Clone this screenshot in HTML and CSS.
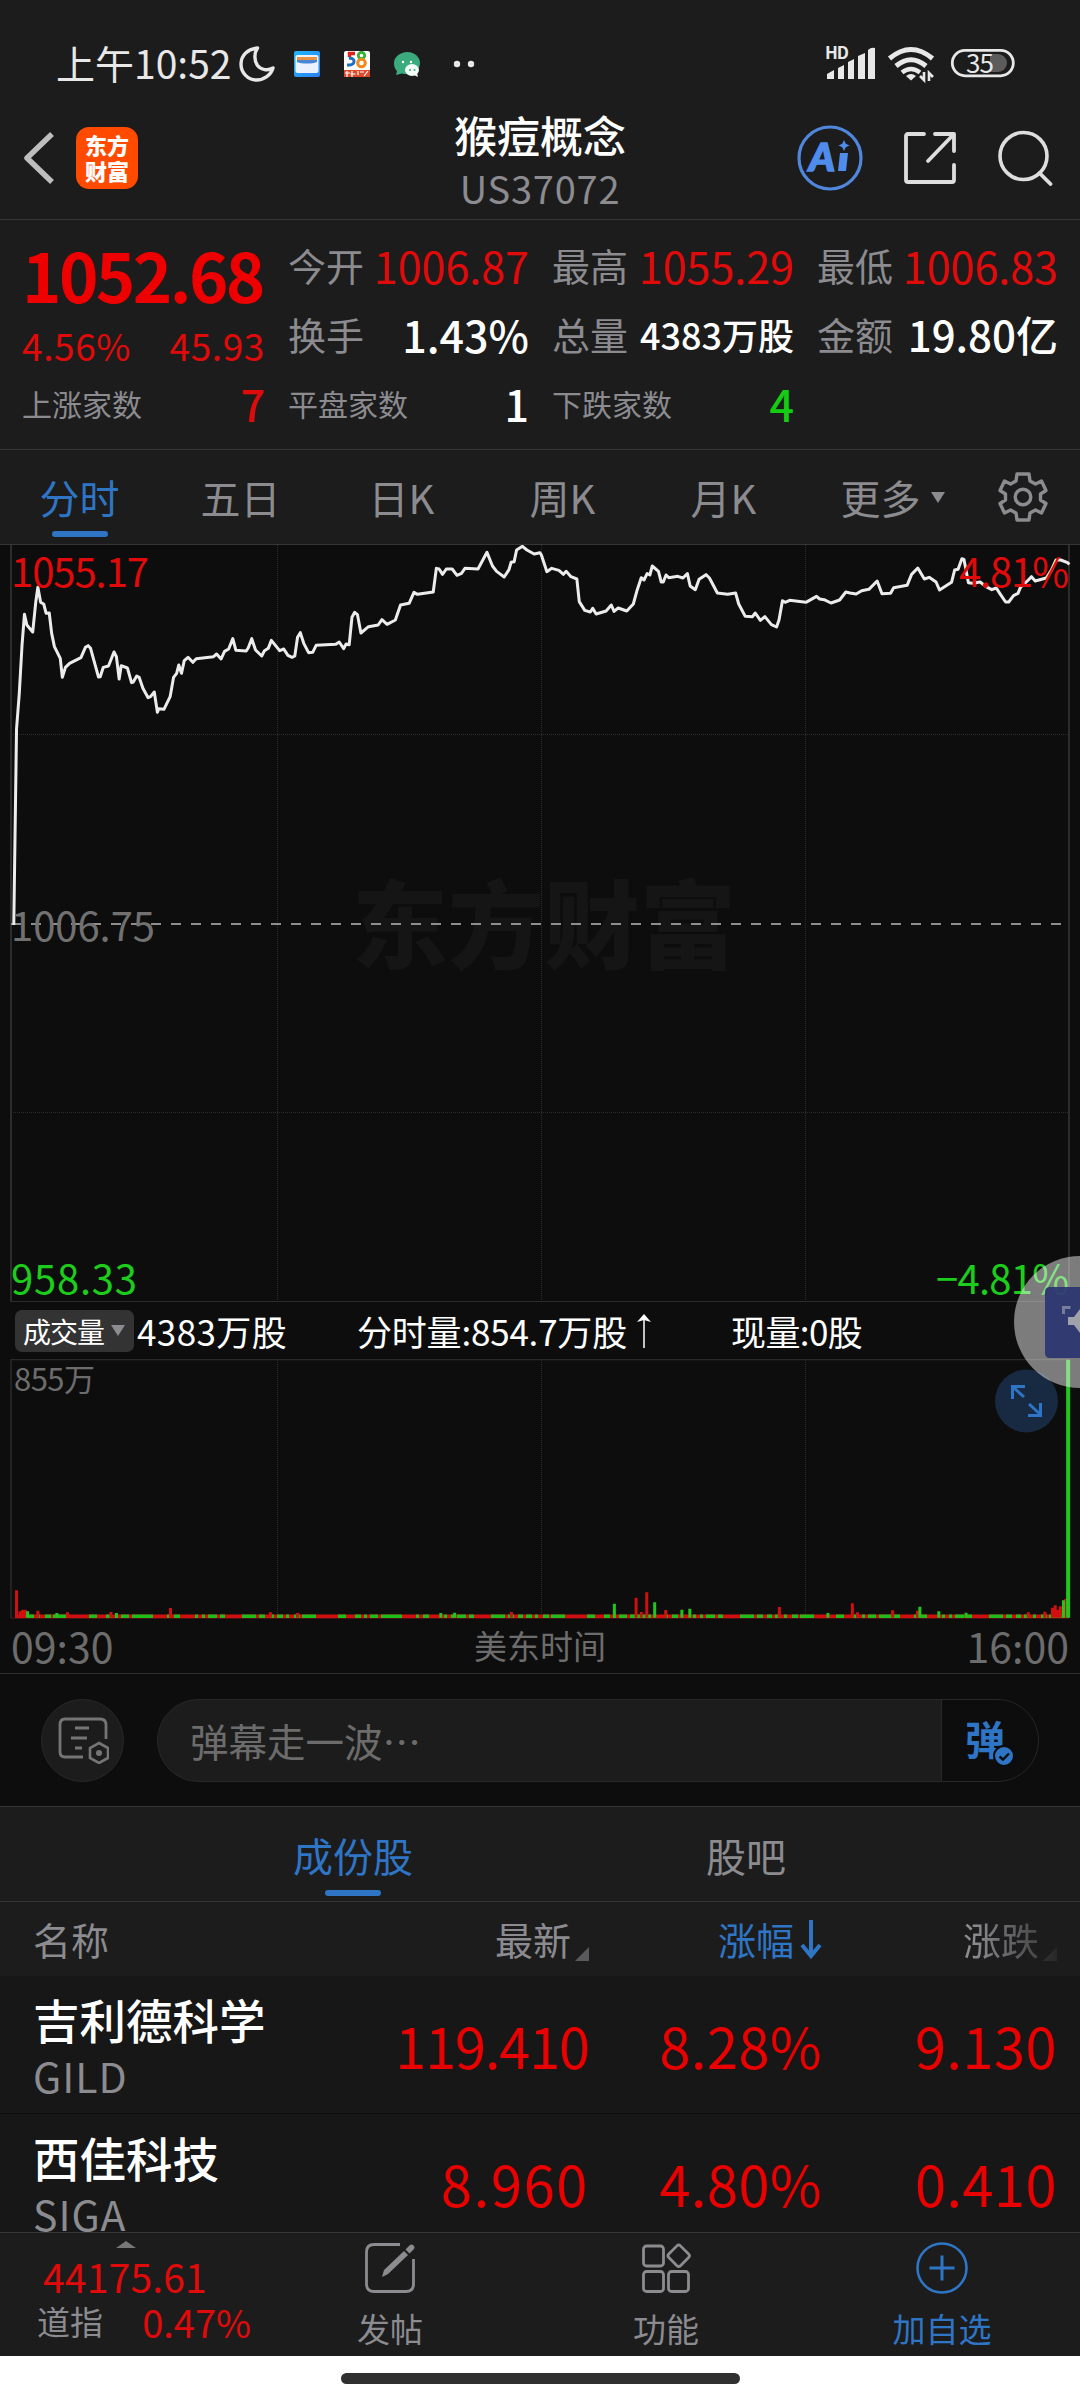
FILE: index.html
```html
<!DOCTYPE html>
<html lang="zh-CN">
<head>
<meta charset="UTF-8" />
<meta name="viewport" content="width=device-width, initial-scale=1" />
<title>猴痘概念 US37072</title>
<link rel="stylesheet" href="styles.css">
</head>
<body>
<div class="phone">

  <!-- status bar -->
  <div class="status">
    <span class="clock">上午10:52</span>
    <svg class="moon" width="36" height="36" viewBox="0 0 36 36"><path d="M18.500 2C9 3 2 9 2 18c0 9 7 16 15.500 16C25 34 32 29 34 22c-5 3-12 2-15.500-2.500C15 14.500 15 7 18.500 2z" fill="none" stroke="#e8e8e8" stroke-width="3.400" stroke-linejoin="round"/></svg>
    <svg class="app" width="26" height="26" viewBox="0 0 26 26">
      <defs><linearGradient id="wal" x1="0" y1="0" x2="1" y2="1"><stop offset="0" stop-color="#20b4fa"/><stop offset="1" stop-color="#2d80ee"/></linearGradient></defs>
      <rect width="26" height="26" rx="2" fill="url(#wal)"/>
      <rect x="1.500" y="4" width="23" height="18" rx="2" fill="#e9f2fd"/>
      <rect x="3" y="6" width="20" height="3" fill="#e8913f"/>
      <path d="M3 9h20v2c-5 2-15 2-20 0z" fill="#4a86d8"/>
    </svg>
    <svg class="app" width="26" height="26" viewBox="0 0 26 26">
      <rect width="26" height="26" rx="2" fill="#fff"/>
      <path d="M11 2.500H5.500V6" fill="none" stroke="#e0201b" stroke-width="3.500"/>
      <path d="M5 7.500c6-1.500 7 6 1 6.500H3" fill="none" stroke="#1b6fc4" stroke-width="3"/>
      <circle cx="17.500" cy="4.500" r="3.200" fill="none" stroke="#35b234" stroke-width="2.800"/>
      <circle cx="17.500" cy="12" r="3.800" fill="none" stroke="#ef8a1d" stroke-width="3"/>
      <rect y="19" width="26" height="7" fill="#dc4a2c"/>
      <path d="M3 20v6M1 22h5M8 20v6M6.500 23h5M14 20v4M16 21h4M20 25l4-5" stroke="#fff" stroke-width="1.200"/>
    </svg>
    <svg class="app" width="27" height="26" viewBox="0 0 27 26">
      <path d="M13.500 1C6 1 0 6 0 12c0 4 1 6 3 8l-1 4 6-1.500c9 2 18-2 18-10.500C26 6 20.500 1 13.500 1z" fill="#3bab7e"/>
      <ellipse cx="18" cy="19" rx="7" ry="6" fill="#f2fbf6"/><path d="M20 24l4 2-1-4z" fill="#f2fbf6"/>
      <circle cx="9" cy="11" r="1.200" fill="#fff"/><circle cx="17" cy="11" r="1.200" fill="#fff"/>
      <circle cx="16" cy="19" r="1" fill="#3bab7e"/><circle cx="20.500" cy="19" r="1" fill="#3bab7e"/>
    </svg>
    <svg class="dots" width="22" height="8" viewBox="0 0 22 8"><circle cx="4" cy="4" r="3.200" fill="#e8e8e8"/><circle cx="18" cy="4" r="3.200" fill="#e8e8e8"/></svg>
    <svg class="sys" width="194" height="40" viewBox="824 44 194 40">
      <text class="hd" x="825" y="59" textLength="24">HD</text>
      <g fill="#e8e8e8">
        <path d="M827 79v-5l7-4v9zM838 79V68l6-3v14zM848 79V62l6-3v20zM858 79V56l7-3v26zM868 79V50q3-3 7-2v31z"/>
      </g>
      <g fill="none" stroke="#e8e8e8" stroke-width="5">
        <path d="M889.500 58.500q21.500-18 43 0"/>
        <path d="M896 66q15-12.500 30 0"/>
        <path d="M902 72.500q9-7 18 0" stroke-width="4.500"/>
      </g>
      <path d="M906 76q5-4 10 0l-5 4.500z" fill="#e8e8e8"/>
      <path d="M924 72v8l-4-4M929 81v-8l4 4" fill="none" stroke="#e8e8e8" stroke-width="2.600"/>
      <path d="M990 54h8a9 9 0 0 1 0 18h-8z" fill="#5c5c5c"/>
      <rect x="952.300" y="50.300" width="61" height="25.500" rx="12.700" fill="none" stroke="#e8e8e8" stroke-width="2.800"/>
      <text class="bat" x="966" y="73" textLength="28">35</text>
    </svg>
  </div>

  <!-- title bar -->
  <header class="topbar">
    <div class="top-left">
      <svg width="34" height="56" viewBox="0 0 34 56"><path d="M29 4L4 28l25 24" fill="none" stroke="#bebebe" stroke-width="5.500" stroke-linejoin="round"/></svg>
      <div class="logo"><span>东方</span><span>财富</span></div>
    </div>
    <div class="title">
      <h1>猴痘概念</h1>
      <p>US37072</p>
    </div>
    <div class="top-right">
      <svg width="66" height="66" viewBox="0 0 66 66">
        <circle cx="33" cy="33" r="31" fill="none" stroke="#5087dc" stroke-width="3.200"/>
        <text class="ai" x="12" y="46" textLength="26" lengthAdjust="spacingAndGlyphs">A</text>
        <path d="M43 28h8l-2 18h-8z" fill="#4f8cec"/>
        <path d="M47 15l1.800 3.700L52.500 20.500l-3.700 1.800L47 26l-1.800-3.700-3.700-1.800 3.700-1.800z" fill="#4f8cec"/>
      </svg>
      <svg width="54" height="54" viewBox="0 0 54 54"><path d="M21 3H5q-2 0-2 2v44q0 2 2 2h44q2 0 2-2V34M32 3h19v17M51 3L25 30" fill="none" stroke="#dedede" stroke-width="3.800" stroke-linecap="round" stroke-linejoin="round"/></svg>
      <svg width="56" height="56" viewBox="0 0 56 56"><circle cx="26.500" cy="26" r="23.500" fill="none" stroke="#dedede" stroke-width="3.600"/><path d="M42.500 43l11 11" stroke="#dedede" stroke-width="3.800" stroke-linecap="round"/></svg>
    </div>
  </header>

  <!-- quote -->
  <section class="quote">
    <div class="q-col">
      <div class="price">1052.68</div>
      <div class="change"><span>4.56%</span><span>45.93</span></div>
      <div class="q-row"><label class="small">上涨家数</label><b class="red">7</b></div>
    </div>
    <div class="q-col">
      <div class="q-row"><label>今开</label><span class="red">1006.87</span></div>
      <div class="q-row"><label>换手</label><b>1.43%</b></div>
      <div class="q-row"><label class="small">平盘家数</label><b>1</b></div>
    </div>
    <div class="q-col">
      <div class="q-row"><label>最高</label><span class="red">1055.29</span></div>
      <div class="q-row"><label>总量</label><b class="vol">4383万股</b></div>
      <div class="q-row"><label class="small">下跌家数</label><b class="green">4</b></div>
    </div>
    <div class="q-col">
      <div class="q-row"><label>最低</label><span class="red">1006.83</span></div>
      <div class="q-row"><label>金额</label><b class="amt">19.80亿</b></div>
    </div>
  </section>

  <nav class="periods">
    <a class="active">分时</a>
    <a>五日</a>
    <a>日K</a>
    <a>周K</a>
    <a>月K</a>
    <a class="more">更多<i class="tri"></i></a>
    <svg width="50" height="52" viewBox="-25 -26 50 52"><path d="M-6-23H6L7-16L12.500-13L18.500-16L23-6.500L17.500-3V3L23 6.500L18.500 16L12.500 13L7 16L6 23H-6L-7 16L-12.500 13L-18.500 16L-23 6.500L-17.500 3V-3L-23-6.500L-18.500-16L-12.500-13L-7-16Z" fill="none" stroke="#8b8b90" stroke-width="3.400" stroke-linejoin="round"/><circle r="7.800" fill="none" stroke="#8b8b90" stroke-width="3.400"/></svg>
  </nav>

  <!-- intraday chart -->
  <svg class="chart" width="1080" height="757" viewBox="0 545 1080 757">
    <text class="watermark" x="352" y="961" textLength="384">东方财富</text>
    <g class="grid">
      <path d="M277.500 545V1301M541.500 545V1301M805.500 545V1301M11 734.500H1069M11 1112.500H1069"/>
    </g>
    <path d="M11 545V1302H1069V545" fill="none" stroke="#2c2c2c" stroke-width="2"/>
    <path d="M11 924H1069" stroke="#8e8e8e" stroke-width="2" stroke-dasharray="10 10"/>
    <svg x="0" y="545" width="1080" height="756" viewBox="0 45 3136 2268" preserveAspectRatio="none">
      <polyline class="line" points="40,1185 48,597 56,490 64,345 71,253 78,285 95,306 104,215 110,172 118,217 127,222 134,250 143,249 150,310 158,350 175,385 181,442 190,412 202,400 235,383 248,352 256,347 263,355 275,400 286,441 291,440 300,412 315,408 331,366 338,380 346,447 352,407 370,414 382,458 387,456 397,438 404,442 415,475 430,503 437,500 448,486 457,547 461,536 476,538 494,500 504,442 513,430 519,405 527,430 535,392 546,382 560,397 570,386 620,380 629,372 642,387 652,364 664,357 676,326 685,361 715,363 721,353 731,326 742,360 760,378 768,362 779,355 788,331 812,362 824,357 836,376 848,382 856,378 864,322 872,308 882,340 896,368 908,367 918,346 975,343 985,336 998,356 1005,342 1014,344 1022,262 1030,247 1038,254 1048,309 1070,290 1098,285 1109,269 1124,283 1148,270 1163,225 1188,220 1202,187 1212,193 1258,186 1267,115 1275,117 1285,133 1296,117 1313,117 1327,136 1340,130 1350,115 1388,117 1414,67 1430,108 1442,124 1464,141 1478,119 1484,97 1493,95 1500,60 1517,49 1530,60 1551,72 1568,68 1572,75 1588,125 1602,115 1623,121 1636,133 1644,124 1658,140 1675,147 1682,215 1698,241 1714,246 1721,235 1731,252 1760,243 1775,225 1783,244 1795,234 1820,243 1839,222 1849,184 1862,143 1870,150 1879,131 1887,135 1894,108 1912,124 1920,156 1926,156 1934,135 1942,143 1968,139 1983,144 1996,131 2004,168 2019,179 2030,148 2050,134 2060,144 2083,189 2113,193 2136,189 2145,222 2164,259 2185,260 2193,249 2208,271 2221,260 2240,284 2255,291 2262,270 2272,212 2280,217 2293,211 2340,217 2371,199 2380,207 2393,209 2413,219 2438,210 2456,186 2468,189 2486,192 2502,182 2523,178 2547,153 2561,191 2586,190 2595,173 2634,166 2647,133 2665,114 2684,147 2698,142 2718,156 2728,180 2763,157 2772,120 2782,118 2793,86 2799,88 2812,158 2824,160 2846,156 2863,170 2880,179 2893,174 2903,190 2920,216 2929,216 2943,197 2956,190 2963,172 2986,150 2995,140 3006,153 3038,144 3053,120 3066,90 3080,90 3100,98 3105,103"/>
    </svg>
    <text class="lbl up" x="11" y="587" textLength="138">1055.17</text>
    <text class="lbl up" x="959" y="587" textLength="110">4.81%</text>
    <text class="lbl mid" x="11" y="941" textLength="144">1006.75</text>
    <text class="lbl down" x="11" y="1294" textLength="126">958.33</text>
    <text class="lbl down" x="936" y="1294" textLength="133">−4.81%</text>
  </svg>

  <div class="vol-info">
    <span class="badge">成交量<i class="tri"></i></span>
    <span class="v1">4383万股</span>
    <span class="v2">分时量:854.7万股<svg width="16" height="34" viewBox="0 0 16 34"><path d="M8 34V3" stroke="#fff" stroke-width="1.500"/><path d="M1 8l7-8 7 8-7-2z" fill="#fff"/></svg></span>
    <span class="v3">现量:0股</span>
  </div>

  <!-- volume chart -->
  <svg class="chart" width="1080" height="260" viewBox="0 1359 1080 260">
    <g class="grid">
      <path d="M277.500 1360V1617M541.500 1360V1617M805.500 1360V1617"/>
    </g>
    <path d="M11 1618V1359.500H1069V1618" fill="none" stroke="#2a2a2a" stroke-width="1.500"/>
    <path d="M11 1618.300H1069" stroke="#551312"/>
    <text class="lbl vmax" x="14" y="1391" textLength="81">855万</text>
    <path d="M15 1616.300H1069" stroke="#d01010" stroke-width="3.400"/>
    <path d="M28 1616.300H1069" stroke="#1dbd1a" stroke-width="3.400" stroke-dasharray="6 3 3 5 6 2 14 22 8 9 6 3 3 3 8 3 21 14 3 4 6 15 3 4 3 3 9 3 5 17 14 3 6 4 5 3"/>
    <svg x="0" y="1359" width="1080" height="259" viewBox="0 358 3136 777" preserveAspectRatio="none">
      <path class="bar r" d="M48 1134V1052M58 1134V1115M66 1134V1110M73 1134V1110M110 1134V1113M196 1134V1118M322 1134V1117M495 1134V1105M785 1134V1118M864 1134V1120M1485 1134V1117M1847 1134V1074M1862 1134V1117M1878 1134V1058M1933 1134V1111M2263 1134V1102M2475 1134V1091M2490 1134V1118M2592 1134V1112M2664 1134V1113M2986 1134V1118M3034 1134V1116M3056 1134V1104M3064 1134V1097M3072 1134V1110M3079 1134V1100M3095 1134V1077"/>
      <path class="bar g" d="M80 1134V1115M165 1134V1120M338 1134V1120M1280 1134V1120M1320 1134V1119M1784 1134V1092M1901 1134V1088M1980 1134V1110M2003 1134V1107M2404 1134V1120M2671 1134V1101M2726 1134V1115M2805 1134V1119M3088 1134V1082M3100 1134V360M3103 1134V360"/>
    </svg>
    <circle cx="1026.500" cy="1401" r="31.500" fill="#172a42"/>
    <path d="M1024 1397l-12-11M1012.500 1399v-12.500H1025M1029 1404l12 11M1040.500 1403v12.500H1028" fill="none" stroke="#2f75c5" stroke-width="3"/>
  </svg>
  <div class="axis"><span>09:30</span><span class="zone">美东时间</span><span>16:00</span></div>

  <!-- barrage input -->
  <div class="barrage">
    <div class="round">
      <svg width="52" height="48" viewBox="57 1717 52 48"><path d="M83 1758H65q-5 0-5-5v-27q0-6 5-6h35q6 0 6 6v14M75 1729h14M71 1739h16M75 1749h7" fill="none" stroke="#757575" stroke-width="2.800"/><path d="M99 1744l9 5v10l-9 5-9-5v-10z" fill="none" stroke="#757575" stroke-width="2.600"/><circle cx="99" cy="1754" r="3" fill="#757575"/></svg>
    </div>
    <div class="field">
      <span class="hint">弹幕走一波…</span>
      <div class="dan"><span>弹</span><svg width="22" height="22" viewBox="0 0 22 22"><circle cx="11" cy="11" r="10" fill="#2f75c5" stroke="#0d0d0d" stroke-width="2"/><path d="M6.500 11.500l3.500 3 6-6" fill="none" stroke="#0d0d0d" stroke-width="2.400"/></svg></div>
    </div>
  </div>

  <nav class="tabs">
    <a class="active">成份股</a>
    <a>股吧</a>
  </nav>

  <!-- constituents -->
  <div class="list-head">
    <span class="name">名称</span>
    <span class="c1">最新<i class="corner"></i></span>
    <span class="c2">涨幅<svg width="22" height="40" viewBox="0 0 22 40"><path d="M11 1v34M2 26l9 11 9-11" fill="none" stroke="#2f75c5" stroke-width="4"/></svg></span>
    <span class="c3">涨跌<i class="corner"></i></span>
  </div>
  <div class="list">
    <div class="stock">
      <div class="name"><b>吉利德科学</b><small>GILD</small></div>
      <span class="c1 long">119.410</span><span class="c2">8.28%</span><span class="c3">9.130</span>
    </div>
    <div class="stock">
      <div class="name"><b>西佳科技</b><small>SIGA</small></div>
      <span class="c1">8.960</span><span class="c2">4.80%</span><span class="c3">0.410</span>
    </div>
  </div>

  <footer class="bottom">
    <div class="index">
      <i class="caret"></i>
      <div class="idx-val">44175.61</div>
      <div class="idx-row"><span>道指</span><span class="red">0.47%</span></div>
    </div>
    <a>
      <svg width="52" height="52" viewBox="0 0 52 52"><path d="M36 2.500H10Q2.500 2.500 2.500 10v32q0 7.500 7.500 7.500h32q7.500 0 7.500-7.500V17" fill="none" stroke="#8b8b90" stroke-width="2.800"/><path d="M18 35l2-7 20-19 4 4-20 19zM41.500 7.500l4-4q2-2 4 0t0 4l-4 4z" fill="#8b8b90"/></svg>
      <span>发帖</span>
    </a>
    <a>
      <svg width="52" height="52" viewBox="0 0 52 52"><g fill="none" stroke="#8b8b90" stroke-width="2.800"><rect x="3.500" y="4" width="20" height="20" rx="3"/><rect x="3.500" y="29.500" width="20" height="20" rx="3"/><rect x="28.500" y="29.500" width="20" height="20" rx="3"/><rect x="30.500" y="5.500" width="16.500" height="16.500" rx="2.500" transform="rotate(45 38.700 13.700)"/></g></svg>
      <span>功能</span>
    </a>
    <a class="active">
      <svg width="52" height="52" viewBox="0 0 52 52"><circle cx="26" cy="26" r="24.500" fill="none" stroke="#2f75c5" stroke-width="2.600"/><path d="M26 13.500v25M13.500 26h25" stroke="#2f75c5" stroke-width="3"/></svg>
      <span>加自选</span>
    </a>
  </footer>
  <div class="home"><div class="home-bar"></div></div>

  <!-- floating ball, half off screen -->
  <svg class="float" width="67" height="134" viewBox="1013 1255 67 134">
    <circle cx="1080" cy="1322" r="66" fill="#fff" fill-opacity=".46"/>
    <path d="M1080 1287h-30q-5 0-5 5v61q0 5 5 5h30z" fill="#2c3670" fill-opacity=".93"/>
    <path d="M1063.500 1314v-6.500h7" fill="none" stroke="#777d98" stroke-width="3"/>
    <path d="M1080 1309l-6 8h-6v8h6l6 8z" fill="#a0a2aa"/>
  </svg>
</div>
</body>
</html>
```
FILE: styles.css
```css
* {
  box-sizing: border-box;
}
body {
  margin: 0;
  background-color: #1c1c1c;
  color: #fff;
  font-family: "Noto Sans CJK SC", sans-serif;
}
svg {
  display: block;
  flex: none;
}
svg text {
  font-family: "Noto Sans CJK SC", sans-serif;
}
.phone {
  position: relative;
  width: 1080px;
  height: 2400px;
  overflow: hidden;
}
.red {
  color: #e00a0a;
}
.green {
  color: #13cd13;
}

/* status bar */
.status {
  display: flex;
  align-items: center;
  height: 100px;
  padding: 27px 62px 0 56px;
}
.clock {
  font-size: 39px;
  line-height: 40px;
  width: 183px;
  margin-top: -4px;
  color: #e8e8e8;
  white-space: nowrap;
}
.moon {
  margin-right: 19px;
}
.app {
  margin-right: 24px;
}
.dots {
  margin-left: 8px;
}
.sys {
  margin-left: auto;
}
.hd {
  font-size: 17px;
  font-weight: 700;
  fill: #e8e8e8;
}
.bat {
  font-size: 26px;
  fill: #e8e8e8;
}

/* title bar */
.topbar {
  display: grid;
  grid-template-columns: 1fr auto 1fr;
  align-items: center;
  height: 120px;
  border-bottom: 1px solid #363636;
}
.top-left {
  display: flex;
  align-items: center;
  gap: 19px;
  padding: 0 0 3px 23px;
}
.logo {
  display: flex;
  flex-direction: column;
  align-items: center;
  justify-content: center;
  width: 62px;
  height: 62px;
  padding-bottom: 3px;
  border-radius: 13px;
  background-color: #ff4a00;
  font-size: 22px;
  font-weight: 900;
  line-height: 26px;
}
.title {
  text-align: center;
  padding-bottom: 2px;
}
.title h1 {
  margin: 0;
  font-size: 43px;
  font-weight: 500;
  line-height: 58px;
}
.title p {
  margin: 0;
  font-size: 38px;
  line-height: 49px;
  letter-spacing: 0.8px;
  color: #8b8b90;
}
.top-right {
  display: flex;
  justify-content: flex-end;
  align-items: center;
  gap: 40px;
  padding: 0 27px 3px 0;
}
.ai {
  font-family: Lato, sans-serif;
  font-size: 37px;
  font-weight: 900;
  font-style: italic;
  fill: #4f8cec;
  stroke: #4f8cec;
  stroke-width: 1.5;
}

/* quote */
.quote {
  display: grid;
  grid-template-columns: 243px 241px 242px 241px;
  column-gap: 23px;
  height: 230px;
  padding: 10px 22px 0;
  border-bottom: 1px solid #363636;
}
.q-row {
  display: flex;
  justify-content: space-between;
  align-items: center;
  height: 69px;
  font-size: 43px;
  line-height: 60px;
  white-space: nowrap;
}
.q-row b {
  font-weight: 500;
}
.q-row label {
  font-size: 38px;
  color: #8b8b90;
}
.q-row label.small {
  font-size: 30px;
}
.q-row b.vol {
  font-size: 36px;
}
.q-row b.amt {
  font-size: 42px;
}
.price {
  height: 88px;
  line-height: 88px;
  font-size: 67px;
  font-weight: 700;
  letter-spacing: -2.6px;
  color: #ee0000;
}
.change {
  display: flex;
  justify-content: space-between;
  height: 54px;
  margin-bottom: -4px;
  line-height: 54px;
  font-size: 37px;
  letter-spacing: 0.6px;
  color: #e00a0a;
}

/* period tabs */
.periods {
  display: grid;
  grid-template-columns: repeat(6, 161px) 1fr;
  align-items: center;
  height: 95px;
  padding-right: 1px;
  border-bottom: 1px solid #363636;
  font-size: 40px;
  color: #8b8b90;
}
.periods a {
  display: flex;
  justify-content: center;
  align-items: center;
  height: 94px;
  margin-left: -2px;
  line-height: 94px;
}
.periods a.more {
  margin-left: 14px;
}
.periods a.active,
.tabs a.active {
  position: relative;
  color: #2f75c5;
}
.periods a.active::after,
.tabs a.active::after {
  content: "";
  position: absolute;
  left: 50%;
  bottom: 7px;
  width: 56px;
  height: 6px;
  margin-left: -28px;
  border-radius: 3px;
  background-color: #2f75c5;
}
.periods svg {
  margin-left: 32px;
}
.tri {
  width: 0;
  height: 0;
  border: 7px solid transparent;
  border-top: 11px solid #8b8b90;
  border-bottom: 0;
  margin-left: 10px;
}

/* charts */
.chart {
  background-color: #0d0d0d;
}
.grid path {
  fill: none;
  stroke: #2d2d2d;
  stroke-width: 1;
  stroke-dasharray: 1 1;
}
.line {
  fill: none;
  stroke: #ececec;
  stroke-width: 3;
  stroke-linejoin: round;
  vector-effect: non-scaling-stroke;
}
.watermark {
  font-size: 96px;
  font-weight: 900;
  fill: #151515;
}
.lbl {
  font-size: 40px;
}
.up {
  fill: #e00a0a;
}
.mid {
  fill: #717171;
}
.down {
  fill: #1ccd1c;
}
.vmax {
  font-size: 31px;
  fill: #6c6c6c;
}
.bar {
  fill: none;
  stroke-width: 3;
  vector-effect: non-scaling-stroke;
}
.bar.r {
  stroke: #d01010;
}
.bar.g {
  stroke: #20c51d;
}
.vol-info {
  display: grid;
  grid-template-columns: 122px 220px 374px 1fr;
  align-items: center;
  height: 57px;
  padding-left: 15px;
  background-color: #0d0d0d;
  font-size: 35px;
  line-height: 50px;
  white-space: nowrap;
}
.v1 {
  letter-spacing: 0.4px;
}
.badge {
  display: flex;
  align-items: center;
  width: 119px;
  height: 42px;
  padding-left: 8px;
  border-radius: 7px;
  background-color: #333;
  font-size: 28px;
  letter-spacing: -1px;
}
.badge .tri {
  margin-left: 7px;
}
.v2 {
  display: flex;
  align-items: center;
  letter-spacing: -0.2px;
}
.v2 svg {
  margin-left: 9px;
}
.v3 {
  letter-spacing: -0.6px;
}
.axis {
  display: flex;
  justify-content: space-between;
  align-items: center;
  height: 55px;
  padding: 0 11px 2px;
  border-bottom: 1px solid #303030;
  background-color: #0d0d0d;
  font-size: 41px;
  line-height: 50px;
  color: #6c6c6c;
}
.zone {
  font-size: 33px;
}

/* barrage */
.barrage {
  display: flex;
  align-items: center;
  gap: 33px;
  height: 133px;
  padding: 0 41px;
  border-bottom: 1px solid #363636;
  background-color: #0d0d0d;
}
.round {
  display: flex;
  align-items: center;
  justify-content: center;
  width: 83px;
  height: 83px;
  border: 1px solid #282828;
  border-radius: 50%;
  background-color: #1c1c1c;
}
.field {
  display: flex;
  justify-content: space-between;
  flex: 1;
  height: 83px;
  border: 1px solid #282828;
  border-radius: 42px;
  background-color: #1c1c1c;
  overflow: hidden;
}
.hint {
  padding-left: 32px;
  font-size: 38.500px;
  line-height: 80px;
  color: #6c6c6c;
}
.dan {
  position: relative;
  width: 97px;
  padding-left: 23px;
  border-left: 1px solid #282828;
  background-color: #0d0d0d;
  font-size: 40px;
  font-weight: 700;
  line-height: 76px;
  color: #2f75c5;
}
.dan svg {
  position: absolute;
  left: 51px;
  top: 45px;
}

/* list tabs */
.tabs {
  display: grid;
  grid-template-columns: 393px 393px;
  justify-content: center;
  height: 95px;
  padding-left: 19px;
  border-bottom: 1px solid #363636;
  font-size: 40px;
  line-height: 96px;
  text-align: center;
  color: #8b8b90;
}
.list-head,
.stock {
  display: grid;
  grid-template-columns: 301px 255px 233px 235px;
  align-items: center;
  padding-left: 33px;
}
.c1,
.c2,
.c3 {
  text-align: right;
}
.list-head {
  height: 74px;
  font-size: 38px;
  line-height: 72px;
  color: #8b8b90;
}
.list-head span {
  display: flex;
  justify-content: flex-end;
  align-items: center;
}
.list-head .name {
  justify-content: flex-start;
}
.list-head .c2 {
  color: #2f75c5;
}
.list-head .c2 svg {
  margin-left: 6px;
}
.list-head .c3 {
  -webkit-mask-image: linear-gradient(to right, #000 65%, rgba(0, 0, 0, 0.2));
  mask-image: linear-gradient(to right, #000 65%, rgba(0, 0, 0, 0.2));
}
.corner {
  width: 0;
  height: 0;
  border-left: 14px solid transparent;
  border-bottom: 14px solid #5a5a5d;
  margin: 30px 0 0 4px;
}
.list {
  height: 256px;
  overflow: hidden;
  background-color: #171717;
}
.stock {
  height: 138px;
  border-bottom: 1px solid #0d0d0d;
  font-size: 56px;
  letter-spacing: 0.4px;
  color: #e90000;
}
.stock span {
  line-height: 134px;
}
.stock .c1 {
  letter-spacing: 1.6px;
}
.stock .c1.long {
  letter-spacing: -1.2px;
}
.stock .name {
  display: flex;
  flex-direction: column;
  letter-spacing: 0;
  color: #fff;
}
.stock b {
  font-size: 46.500px;
  font-weight: 500;
  line-height: 60px;
}
.stock small {
  font-size: 41px;
  line-height: 52px;
  letter-spacing: 1px;
  color: #8b8b90;
}

/* bottom bar */
.bottom {
  display: grid;
  grid-template-columns: 252px 276px 276px 276px;
  height: 124px;
  border-top: 1px solid #363636;
  font-size: 33px;
  color: #8b8b90;
}
.bottom a {
  display: flex;
  flex-direction: column;
  align-items: center;
  padding-top: 9px;
}
.bottom a span {
  margin-top: 11px;
  line-height: 46px;
}
.bottom a.active {
  color: #2f75c5;
}
.index {
  display: flex;
  flex-direction: column;
  padding-top: 8px;
}
.caret {
  width: 0;
  height: 0;
  margin-left: 116px;
  border: 10px solid transparent;
  border-top: 0;
  border-bottom: 7px solid #77777a;
}
.idx-val {
  margin-top: 6px;
  padding-left: 43px;
  font-size: 39px;
  line-height: 45px;
  letter-spacing: 0.2px;
  color: #e00a0a;
}
.idx-row {
  display: flex;
  justify-content: space-between;
  padding: 0 1px 0 37px;
  line-height: 45px;
}
.idx-row .red {
  font-size: 38px;
}
.home {
  display: flex;
  justify-content: center;
  height: 44px;
  padding-top: 17px;
  background-color: #fff;
}
.home-bar {
  width: 399px;
  height: 11px;
  border-radius: 6px;
  background-color: #303030;
}
.float {
  position: absolute;
  right: 0;
  top: 1255px;
}
```
